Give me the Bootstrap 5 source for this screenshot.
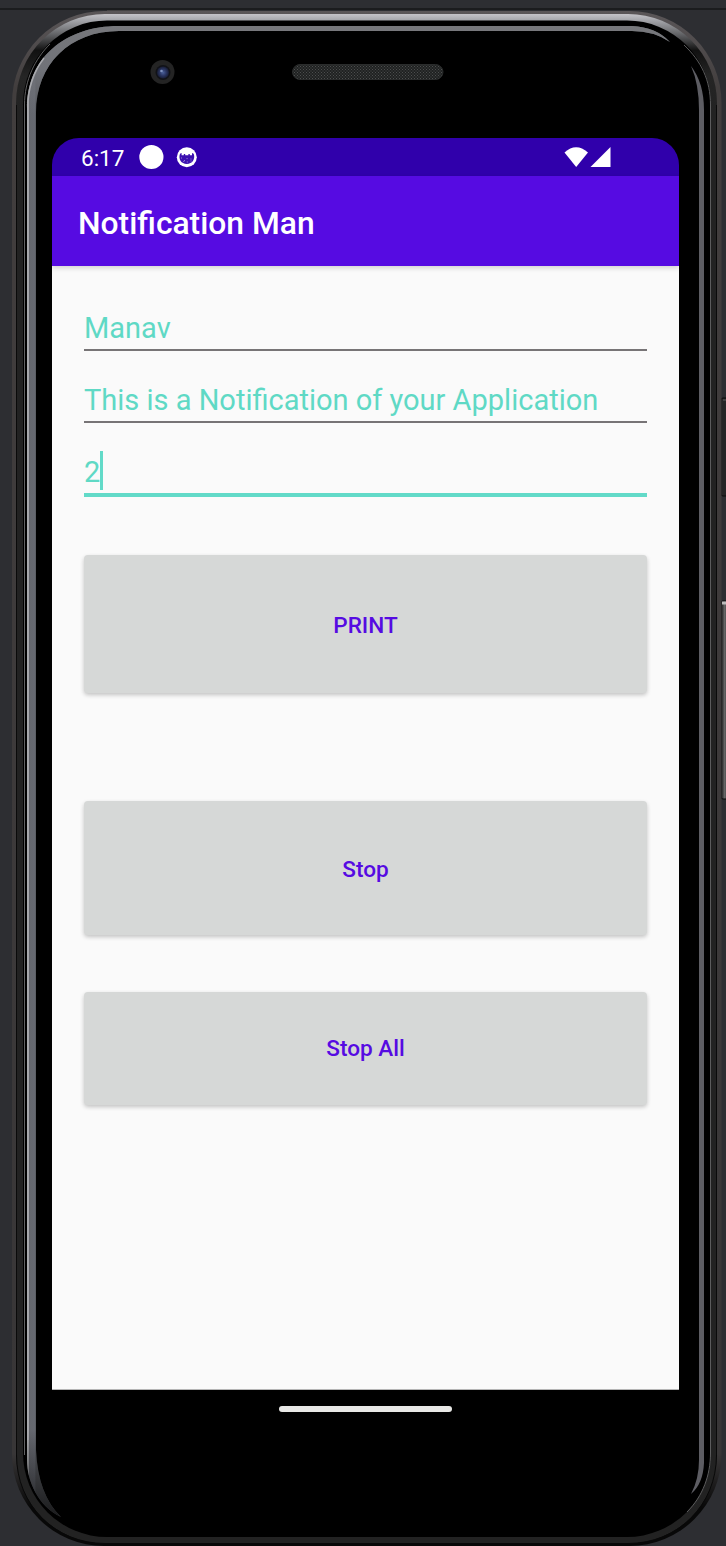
<!DOCTYPE html>
<html lang="en">
<head>
<meta charset="utf-8">
<meta name="viewport" content="width=device-width, initial-scale=1">
<title>Notification Man</title>
<link href="https://cdn.jsdelivr.net/npm/bootstrap@5.3.0/dist/css/bootstrap.min.css" rel="stylesheet">
<style>
  body { background: #2d2e32; font-family: Roboto, "Liberation Sans", sans-serif; }
  .stage { width: 726px; height: 1546px; padding: 138px 47px 0 52px; }
  .bezel { z-index: 0; }
  .screen { z-index: 1; height: 1252px; background: linear-gradient(#3000ab 60px, #fafafa 60px); border-radius: 27px 27px 0 0; }
  .screen-end { height: 1px; background: #b5b5b5; }
  .statusbar { height: 38px; color: #fff; padding-left: 29px; padding-right: 68px; }
  .clock { font-size: 22.5px; line-height: 38px; width: 58px; padding-top: 2px; }
  .appbar { height: 90px; background: #560be2; color: #fff; padding: 4px 26px 0; box-shadow: 0 2px 5px rgba(0,0,0,.16); }
  .apptitle { font-size: 31.8px; font-weight: 500; line-height: 40px; }
  .field { height: 72px; color: #5fd9c5; font-size: 29px; line-height: 40px; }
  .field input { height: 43px; color: #5fd9c5; border-bottom: 2px solid #777476 !important; line-height: 40px; font-size: 29px; padding-bottom: 2px !important; }
  .field input:focus { box-shadow: none; outline: 0; }
  .active-line { height: 46px; border-bottom: 4px solid #62dac8; margin-top: -1px; }
  .active-line .digit { padding-top: 1px; }
  .caret { width: 3.5px; height: 39px; background: #62dac8; margin-left: -.5px; }
  .action { background: #d6d8d7; color: #560be2; font-size: 22.6px; font-weight: 500; border: 0; border-radius: 4px; padding-top: 9px; box-shadow: 0 2px 4px rgba(0,0,0,.22); }
  .action:hover { background: #cccecd; color: #560be2; }
  .print { height: 138px; margin-top: 31px; }
  .stop { height: 134px; margin-top: 108px; }
  .stop-all { height: 113px; margin-top: 57px; padding-top: 7px; }
  .form-pad { padding: 42px 32px 0; }
  .homebar { z-index: 1; width: 173px; height: 6px; background: #e8e8e6; border-radius: 4px; top: 1406px; left: 279px; }
</style>
</head>
<body class="m-0 overflow-hidden">
<main class="stage position-relative overflow-hidden">
  <svg class="bezel position-absolute top-0 start-0" width="726" height="1546" viewBox="0 0 726 1546" aria-hidden="true">
    <defs>
      <linearGradient id="rim" gradientUnits="userSpaceOnUse" x1="0" y1="11" x2="0" y2="1546">
        <stop offset="0" stop-color="#5a5658"/><stop offset=".05" stop-color="#423e3e"/><stop offset=".94" stop-color="#383637"/><stop offset=".975" stop-color="#080808"/>
      </linearGradient>
      <linearGradient id="metal" gradientUnits="userSpaceOnUse" x1="0" y1="14" x2="0" y2="110">
        <stop offset="0" stop-color="#c4c3c8"/><stop offset=".06" stop-color="#a7a8ad"/><stop offset=".2" stop-color="#68696c"/><stop offset=".38" stop-color="#111"/><stop offset=".65" stop-color="#252525"/><stop offset="1" stop-color="#222"/>
      </linearGradient>
      <linearGradient id="edge" gradientUnits="userSpaceOnUse" x1="27" y1="0" x2="36" y2="0">
        <stop offset="0" stop-color="#b4b5b8"/><stop offset=".2" stop-color="#a0a1a5"/><stop offset=".27" stop-color="#65676e"/><stop offset=".85" stop-color="#666971"/><stop offset="1" stop-color="#56585d"/>
      </linearGradient>
      <linearGradient id="edgeTop" gradientUnits="userSpaceOnUse" x1="0" y1="26" x2="0" y2="115">
        <stop offset="0" stop-color="#77787c"/><stop offset=".5" stop-color="#707278"/><stop offset="1" stop-color="#707278" stop-opacity="0"/>
      </linearGradient>
      <linearGradient id="edgeEnd" gradientUnits="userSpaceOnUse" x1="0" y1="1430" x2="0" y2="1518">
        <stop offset="0" stop-color="#000" stop-opacity="0"/><stop offset="1" stop-color="#000" stop-opacity=".7"/>
      </linearGradient>
      <linearGradient id="key" x1="0" y1="0" x2="1" y2="0"><stop offset="0" stop-color="#111"/><stop offset=".4" stop-color="#686868"/><stop offset=".7" stop-color="#393939"/></linearGradient>
      <pattern id="mesh" width="3" height="3" patternUnits="userSpaceOnUse"><path fill="#202222" d="M0 0h3v3H0z"/><path fill="#4c4e4e" d="M0 0h1v1H0zM1.5 1.5h1v1h-1z"/></pattern>
      <radialGradient id="lens"><stop offset="0" stop-color="#4a609a"/><stop offset=".5" stop-color="#2c3867"/><stop offset="1" stop-color="#171c34"/></radialGradient>
      <path id="glint" d="M27 1460V108C27 59 64 26 119 26H632Q656 27 670 42Q654 31 632 31H119C70 31 36 64 36 113V1450Q38 1495 61 1517C38 1506 27 1481 27 1460Z"/>
    </defs>
    <path d="M0 9H726" stroke="#1b1c1e" stroke-width="2"/>
    <path d="M107 10.5H230" stroke="#444243"/>
    <rect x="721" y="398" width="9" height="98" rx="2" fill="#252526" stroke="#0a0a0a"/>
    <path d="M723 400H726" stroke="#606060"/>
    <rect x="721" y="601" width="9" height="198" rx="2" fill="url(#key)" stroke="#0a0a0a"/>
    <path d="M722 603H726" stroke="#bbb" stroke-width="3"/>
    <rect x="12" y="11" width="709.5" height="1535" rx="92" fill="url(#rim)"/>
    <rect x="16" y="14" width="701" height="1529.5" rx="89" fill="url(#metal)"/>
    <path d="M16.5 1455V105M716.5 105V1455" stroke="#0a0a0a"/>
    <path d="M16.5 1455C16.5 1505 55 1543.5 105 1543.5H628C678 1543.5 716.5 1505 716.5 1455" fill="none" stroke="#080808"/>
    <rect x="23" y="20.5" width="688" height="1516.5" rx="84" fill="#000"/>
    <path d="M24.5 1455V105C24.5 80 35 59 50 44" fill="none" stroke="#626263"/>
    <path d="M684 45C701 61 710.5 80 710.5 105V1453C710.5 1475 703 1496 687 1512" fill="none" stroke="#5c5c5d"/>
    <use href="#glint" fill="url(#edge)"/>
    <use href="#glint" fill="url(#edgeTop)"/>
    <use href="#glint" fill="url(#edgeEnd)"/>
    <path d="M27.8 1440V108C27.8 88 34 71 44 58" fill="none" stroke="#a9aaae" stroke-width="1.5"/>
    <path d="M691 66Q704 83 704 110V1463Q703 1484 691 1494Q699 1479 699 1460V110Q699 84 691 66Z" fill="#5d5d63"/>
    <circle cx="162.5" cy="72" r="12" fill="#242424"/><circle cx="163" cy="72.5" r="7.5" fill="#111217"/><circle cx="163" cy="72.5" r="6" fill="url(#lens)"/><circle cx="161.5" cy="71" r="1.3" fill="#7f92c0"/>
    <rect x="292.5" y="64.5" width="150.5" height="15" rx="7.5" fill="url(#mesh)" stroke="#2a2c2c"/>
  </svg>

  <section class="screen position-relative overflow-hidden d-flex flex-column">
    <div class="statusbar d-flex align-items-center">
      <span class="clock">6:17</span>
      <svg width="60" height="26" viewBox="0 0 60 26" aria-hidden="true">
        <circle cx="12.4" cy="13" r="12.1" fill="#fff"/>
        <circle cx="47.8" cy="13.3" r="10" fill="#fff"/>
        <path d="M41 9.8L42.6 9v2.2h2.2V10h1.4v1.3h3.2V10h1.4v1.3H53V9l1.7.8c1.9 5.4-1.5 10.2-6.9 10.2s-8.8-4.8-6.8-10.2z" fill="#3b10b0"/>
        <path d="M42 14h.9m2.2 2.6h.9m1.6-2h.9m3 .4h.9m-4.6 3h.9m-4.4-.6h.9m6.4-.4h.9" stroke="#fff" stroke-width=".8" opacity=".7"/>
      </svg>
      <svg class="ms-auto" width="48" height="22" viewBox="0 0 48 22" aria-hidden="true">
        <path d="M1.5 6.5Q13-4 25 6.5L13.2 21z" fill="#fff"/><path d="M47.5 1V21H27.5z" fill="#fff"/>
      </svg>
    </div>
    <header class="appbar d-flex align-items-center"><h1 class="apptitle m-0">Notification Man</h1></header>
    <form class="form-pad d-flex flex-column">
      <div class="field"><input class="form-control rounded-0 border-0 bg-transparent p-0 w-100" type="text" value="Manav" aria-label="Title"></div>
      <div class="field"><input class="form-control rounded-0 border-0 bg-transparent p-0 w-100" type="text" value="This is a Notification of your Application" aria-label="Message"></div>
      <div class="field"><div class="active-line d-flex align-items-start"><span class="digit">2</span><span class="caret"></span></div></div>
      <button type="button" class="btn action print w-100">PRINT</button>
      <button type="button" class="btn action stop w-100">Stop</button>
      <button type="button" class="btn action stop-all w-100">Stop All</button>
    </form>
    <div class="screen-end mt-auto"></div>
  </section>
  <div class="homebar position-absolute"></div>
</main>
<script src="https://cdn.jsdelivr.net/npm/bootstrap@5.3.0/dist/js/bootstrap.bundle.min.js"></script>
</body>
</html>
